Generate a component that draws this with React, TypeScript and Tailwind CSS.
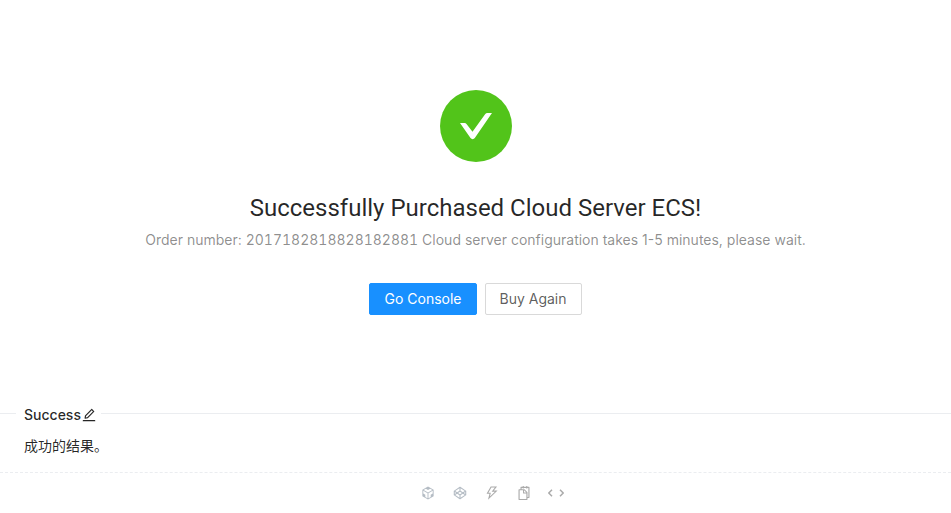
import {
  AiOutlineCodeSandbox,
  AiOutlineCodepen,
  AiOutlineEdit,
  AiOutlineSnippets,
  AiOutlineThunderbolt,
} from 'react-icons/ai';

function SuccessMark() {
  return (
    <svg className="size-18" viewBox="0 0 72 72" role="img" aria-label="Success">
      <circle cx="36" cy="36" r="36" fill="#52c41a" />
      <path
        d="M20 33h4.600c.8 0 1.400.3 1.900.9l6 7.900 12.600-17.600c.6-.8 1.400-1.200 2.300-1.200H52L34.800 48c-1.100 1.500-3.200 1.500-4.300 0z"
        fill="#fff"
      />
    </svg>
  );
}

function CodeBrackets() {
  return (
    <svg className="size-4" viewBox="0 0 16 16" fill="none" stroke="currentColor" strokeWidth="1.500">
      <path d="M4 4.800.8 8 4 11.200M12 4.800 15.200 8 12 11.200" />
    </svg>
  );
}

const actions = [
  { label: 'Open in CodeSandbox', icon: <AiOutlineCodeSandbox />, tone: 'text-[#b4bcc4]' },
  { label: 'Open in CodePen', icon: <AiOutlineCodepen />, tone: 'text-[#b4bcc4]' },
  { label: 'Open in StackBlitz', icon: <AiOutlineThunderbolt />, tone: 'text-[#aaaaaa]' },
  { label: 'Copy code', icon: <AiOutlineSnippets />, tone: 'text-[#aaaaaa]' },
  { label: 'Show code', icon: <CodeBrackets />, tone: 'text-[#aaaaaa]' },
];

export default function App() {
  return (
    <main className="bg-white font-['Inter','Noto_Sans_CJK_SC',sans-serif] text-sm text-black/85">
      <section className="flex flex-col items-center px-8 pt-[90px] pb-[90px] text-center">
        <SuccessMark />
        <h1 className="mt-[25px] font-['Roboto',sans-serif] text-2xl leading-[42px]">
          Successfully Purchased Cloud Server ECS!
        </h1>
        <p className="leading-[22px] text-black/45">
          Order number: <span className="tabular-nums">2017182818828182881</span> Cloud server configuration takes 1-5
          minutes, please wait.
        </p>
        <div className="mt-8 flex gap-2">
          <button type="button" className="h-8 rounded-xs border border-[#1890ff] bg-[#1890ff] px-[14px] text-white">
            Go Console
          </button>
          <button type="button" className="h-8 rounded-xs border border-[#d9d9d9] bg-white px-[14px] text-black/65">
            Buy Again
          </button>
        </div>
      </section>

      <section>
        <div className="flex h-5 items-start">
          <span className="mt-2 h-px w-4 bg-[#ebedf0]" />
          <h2 className="flex items-center pr-1 pl-2 font-medium">
            Success
            <button type="button" aria-label="Edit">
              <AiOutlineEdit className="size-4" />
            </button>
          </h2>
          <span className="mt-2 h-px flex-1 bg-[#ebedf0]" />
        </div>
        <p className="px-6 pt-[11px] pb-4 leading-5">成功的结果。</p>
        <div className="flex h-10 items-center justify-center gap-4 border-t border-dashed border-[#ebedf0] pl-8 text-base">
          {actions.map((action) => (
            <button key={action.label} type="button" aria-label={action.label} className={action.tone}>
              {action.icon}
            </button>
          ))}
        </div>
      </section>
    </main>
  );
}
